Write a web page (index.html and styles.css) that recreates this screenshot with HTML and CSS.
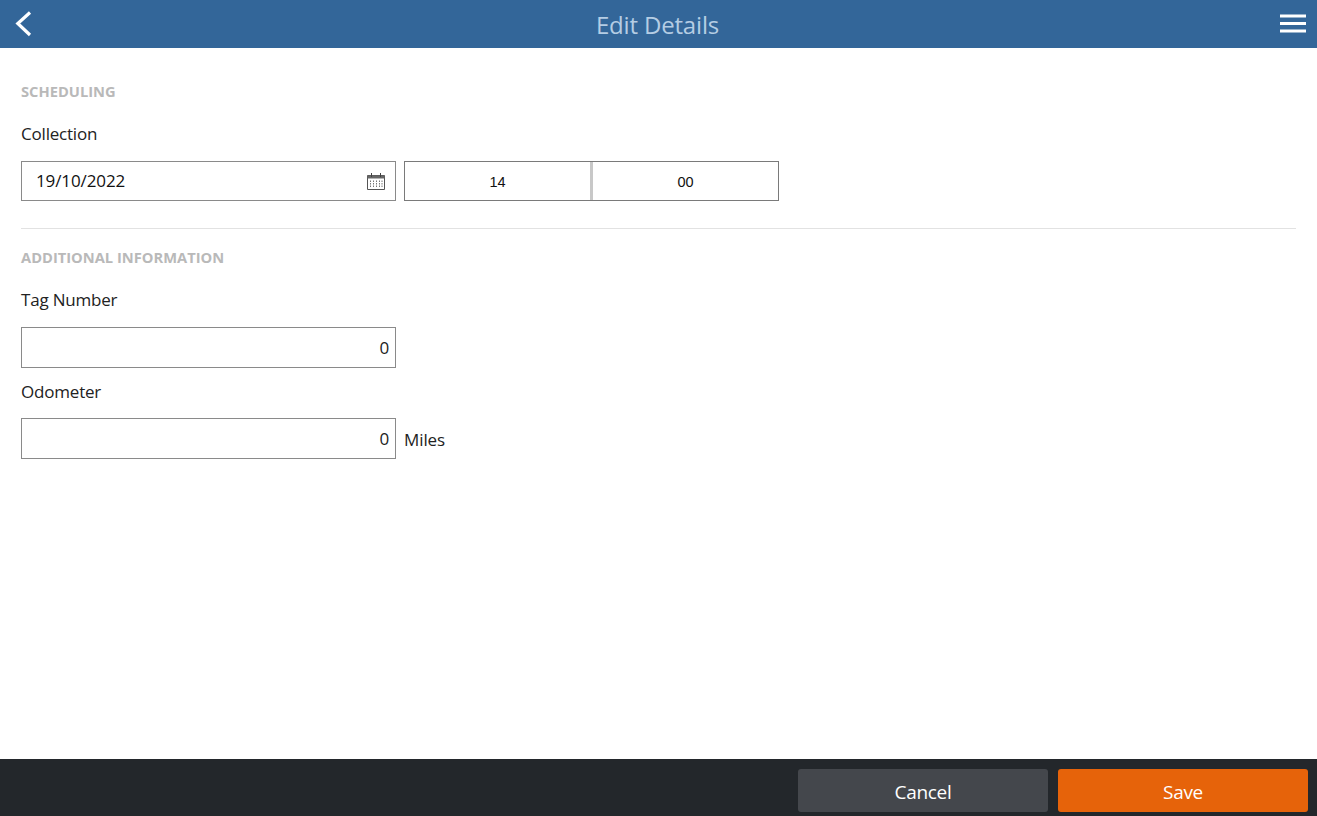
FILE: index.html
```html
<!DOCTYPE html>
<html lang="en">
<head>
<meta charset="utf-8">
<title>Edit Details</title>
<link rel="stylesheet" href="styles.css">
</head>
<body>
<div class="app">
  <header class="topbar">
    <svg class="back" width="18" height="26" viewBox="0 0 18 26"><path d="M15 1.500 L2.800 12.500 L15 24" fill="none" stroke="#fff" stroke-width="3.200"/></svg>
    <h1 class="title">Edit Details</h1>
    <svg class="menu" width="26" height="20" viewBox="0 0 26 20"><path d="M0 2h26M0 9.500h26M0 17h26" stroke="#fff" stroke-width="2.800" fill="none"/></svg>
  </header>
  <main class="content">
    <section class="section first">
      <h2 class="heading">SCHEDULING</h2>
      <div class="label">Collection</div>
      <div class="row">
        <div class="field date">
          <span class="date-text">19/10/2022</span>
          <svg width="20" height="19" viewBox="0 0 20 19"><path d="M1.500 3.500h17v14h-17z" fill="none" stroke="#555"/><path d="M1.500 3.500h17v3h-17z" fill="#666"/><path d="M5.500 1v4M14.500 1v4" stroke="#444"/><path d="M4.500 8.500v7M7.500 8.500v7M10.500 8.500v7M13.500 8.500v7M16 8.500v7" stroke="#777" stroke-dasharray="1.500 1"/></svg>
        </div>
        <div class="time">
          <div class="time-cell">14</div>
          <div class="time-cell split">00</div>
        </div>
      </div>
    </section>
    <section class="section">
      <h2 class="heading">ADDITIONAL INFORMATION</h2>
      <div class="label">Tag Number</div>
      <div class="row"><div class="field num">0</div></div>
      <div class="label second">Odometer</div>
      <div class="row"><div class="field num">0</div><span class="unit">Miles</span></div>
    </section>
  </main>
  <footer class="footer">
    <button class="btn cancel">Cancel</button>
    <button class="btn save">Save</button>
  </footer>
</div>
</body>
</html>
```

FILE: styles.css
```css
* { box-sizing: border-box; }
html, body { margin: 0; height: 100%; }
body { font-family: "Open Sans", "Noto Sans", sans-serif; color: #222; background: #fff; overflow: hidden; }
.app { display: flex; flex-direction: column; height: 816px; }
.topbar { height: 48px; flex: none; background: #336699; display: flex; align-items: center; justify-content: space-between; padding: 0 11px 0 15px; position: relative; }
.back { margin-top: -1px; }
.menu { margin-top: -1px; }
.title { position: absolute; left: 0; right: 2px; top: 7px; margin: 0; text-align: center; font-size: 24px; line-height: 35px; font-weight: 400; color: #b5cde4; letter-spacing: -0.17px; }
.content { flex: 1; padding: 0 21px; }
.section { display: flex; flex-direction: column; }
.section.first { padding-top: 33px; padding-bottom: 27px; border-bottom: 1px solid #e2e2e2; }
.section + .section { padding-top: 18px; }
.heading { margin: 0; font-size: 14.700px; line-height: 20px; font-weight: 700; color: #b9b9b9; }
.label { font-size: 17px; line-height: 24px; margin-top: 21px; margin-bottom: 15px; letter-spacing: -0.2px; }
.label.second { margin-top: 12px; margin-bottom: 14px; }
.row { display: flex; align-items: center; gap: 8px; }
.field { width: 375px; height: 40px; border: 1px solid #8a8a8a; background: #fff; display: flex; align-items: center; font-size: 17px; letter-spacing: -0.1px; }
.date { justify-content: space-between; padding: 0 9px 0 14px; color: #111; }
.date-text { margin-top: -1px; }
.num { height: 41px; justify-content: flex-end; padding-right: 6px; }
.time { display: flex; width: 375px; height: 40px; border: 1px solid #7a7a7a; }
.time-cell { flex: 1; display: flex; align-items: center; justify-content: center; font-family: "Liberation Sans", Arial, sans-serif; font-size: 14.500px; color: #111; padding-top: 1px; }
.split { border-left: 3px solid #c8c8c8; }
.unit { font-size: 17px; margin-top: 1px; letter-spacing: -0.1px; }
.footer { flex: none; height: 57px; background: #23272b; display: flex; justify-content: flex-end; gap: 10px; padding: 10px 9px 4px 0; }
.btn { width: 250px; height: 43px; border: 0; border-radius: 3px; color: #fff; font-family: inherit; font-size: 19px; letter-spacing: -0.3px; padding: 2px 0 0; }
.cancel { background: #44474c; }
.save { background: #e6630a; }
```
